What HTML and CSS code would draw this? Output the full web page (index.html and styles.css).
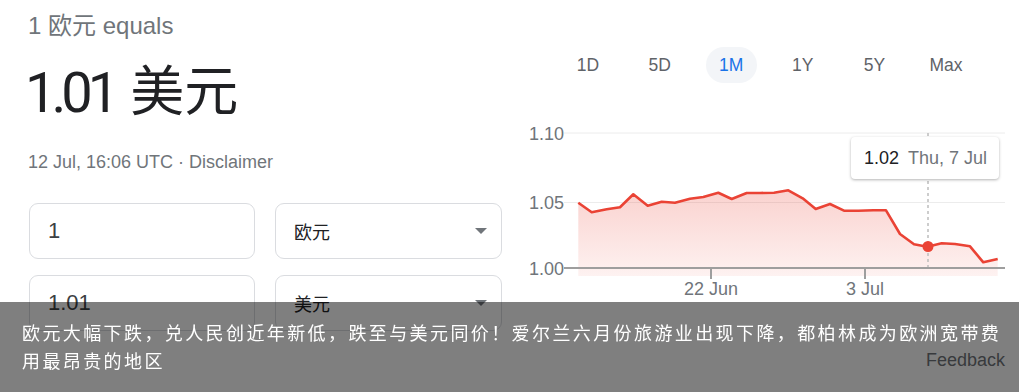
FILE: index.html
```html
<!DOCTYPE html>
<html lang="en">
<head>
    <meta charset="UTF-8">
    <meta name="viewport" content="width=device-width, initial-scale=1.0">
    <title>Currency converter</title>
    <link rel="stylesheet" href="styles.css">
</head>
<body>
    <div class="page">
        <div class="main">
            <div class="left">
                <div class="equals">1 欧元 equals</div>
                <div class="result"><span class="result-num">1.01</span><span class="result-unit">美元</span></div>
                <div class="updated">12 Jul, 16:06 UTC · Disclaimer</div>
                <div class="converter">
                    <div class="field amount">1</div>
                    <div class="field select">欧元<span class="arrow"></span></div>
                    <div class="field amount">1.01</div>
                    <div class="field select">美元<span class="arrow"></span></div>
                </div>
            </div>
            <div class="right">
                <div class="tabs">
                    <span class="tab">1D</span>
                    <span class="tab">5D</span>
                    <span class="tab active">1M</span>
                    <span class="tab">1Y</span>
                    <span class="tab">5Y</span>
                    <span class="tab">Max</span>
                </div>
                <div class="chart">
                    <svg width="499" height="190" viewBox="520 115 499 190">
                        <defs>
                            <linearGradient id="fillGrad" x1="0" y1="0" x2="0" y2="1">
                                <stop offset="0" stop-color="#ea4335" stop-opacity="0.24"/>
                                <stop offset="1" stop-color="#ea4335" stop-opacity="0.07"/>
                            </linearGradient>
                        </defs>
                        <line x1="564" y1="133" x2="1005" y2="133" stroke="#ececec" stroke-width="1"/>
                        <line x1="564" y1="202.5" x2="1005" y2="202.5" stroke="#ececec" stroke-width="1"/>
                        <polygon fill="url(#fillGrad)" points="578.3,202.7 591.7,212.3 606.7,209.3 620,207.3 633.3,194.3 647.7,205.7 661.7,201.7 675,202.7 690,198.7 703.3,197 718.3,192.7 731.7,199 746.7,193 760,193 774,192.7 788.3,190.3 802.7,198.3 815.7,209 830,204 844,210.7 858.3,210.7 873.3,210.3 886,210.3 900,234 914,244.3 927.3,246.7 941.7,243.3 955,244 970,246.3 983.3,262.3 997.7,259 997.7,276 578.3,276"/>
                        <line x1="928" y1="133" x2="928" y2="268" stroke="#bdbdbd" stroke-width="1.5" stroke-dasharray="3 3"/>
                        <line x1="564" y1="268" x2="1005" y2="268" stroke="#9e9e9e" stroke-width="2"/>
                        <line x1="711" y1="268" x2="711" y2="279" stroke="#9e9e9e" stroke-width="2"/>
                        <line x1="865" y1="268" x2="865" y2="279" stroke="#9e9e9e" stroke-width="2"/>
                        <polyline fill="none" stroke="#ea4335" stroke-width="2.6" stroke-linejoin="round" points="578.3,202.7 591.7,212.3 606.7,209.3 620,207.3 633.3,194.3 647.7,205.7 661.7,201.7 675,202.7 690,198.7 703.3,197 718.3,192.7 731.7,199 746.7,193 760,193 774,192.7 788.3,190.3 802.7,198.3 815.7,209 830,204 844,210.7 858.3,210.7 873.3,210.3 886,210.3 900,234 914,244.3 927.3,246.7 941.7,243.3 955,244 970,246.3 983.3,262.3 997.7,259"/>
                        <circle cx="928" cy="246.5" r="5.5" fill="#ea4335"/>
                        <text class="ylabel" x="564" y="140" text-anchor="end">1.10</text>
                        <text class="ylabel" x="564" y="208.5" text-anchor="end">1.05</text>
                        <text class="ylabel" x="564" y="275" text-anchor="end">1.00</text>
                        <text class="xlabel" x="711" y="295" text-anchor="middle">22 Jun</text>
                        <text class="xlabel" x="865" y="295" text-anchor="middle">3 Jul</text>
                    </svg>
                    <div class="tooltip"><span class="tip-value">1.02</span><span class="tip-date">Thu, 7 Jul</span></div>
                </div>
            </div>
        </div>
        <div class="feedback">Feedback</div>
    </div>
    <div class="caption">欧元大幅下跌，兑人民创近年新低，跌至与美元同价！爱尔兰六月份旅游业出现下降，都柏林成为欧洲宽带费用最昂贵的地区</div>
</body>
</html>
```

FILE: styles.css
```css
body {
    margin: 0;
    background-color: white;
    font-family: Arial, "Liberation Sans", "Noto Sans CJK SC", sans-serif;
    color: #202124;
}
.main {
    display: flex;
    gap: 18px;
    padding-left: 28px;
}
.left {
    width: 474px;
}
.equals {
    padding-top: 12px;
    font-size: 24px;
    line-height: 28px;
    color: #70757a;
}
.result {
    margin-top: 21px;
    font-family: Roboto, "Noto Sans CJK SC", sans-serif;
    font-size: 56px;
    line-height: 64px;
    color: #202124;
    display: flex;
}
.result-num {
    letter-spacing: -5px;
    margin-left: -3px;
}
.result-unit {
    margin-left: 16px;
    font-size: 54px;
}
.updated {
    margin-top: 25px;
    font-size: 18px;
    line-height: 24px;
    color: #70757a;
}
.converter {
    margin-top: 29px;
    display: grid;
    grid-template-columns: 226px 227px;
    grid-auto-rows: 56px;
    column-gap: 20px;
    row-gap: 16px;
    padding-left: 1px;
}
.field {
    border: 1px solid #dadce0;
    border-radius: 9px;
    display: flex;
    align-items: center;
    padding-left: 18px;
}
.amount {
    font-size: 22px;
    color: #3c4043;
}
.select {
    font-size: 18px;
    color: #202124;
    justify-content: space-between;
    padding-right: 14px;
}
.arrow {
    width: 0;
    height: 0;
    border-left: 6px solid transparent;
    border-right: 6px solid transparent;
    border-top: 6px solid #70757a;
}
.right {
    width: 499px;
}
.tabs {
    display: flex;
    gap: 20.6px;
    padding-top: 47px;
    padding-left: 42.5px;
}
.tab {
    width: 51px;
    height: 36px;
    line-height: 36px;
    border-radius: 18px;
    text-align: center;
    font-size: 17.5px;
    color: #5f6368;
}
.tab.active {
    background-color: #f3f5f8;
    color: #1a73e8;
}
.chart {
    position: relative;
    margin-top: 32px;
    height: 190px;
}
.chart svg {
    display: block;
}
.ylabel,
.xlabel {
    font-family: Arial, "Liberation Sans", sans-serif;
    font-size: 18px;
    fill: #70757a;
}
.tooltip {
    position: absolute;
    left: 331px;
    top: 22px;
    width: 148px;
    height: 42px;
    box-sizing: border-box;
    padding-left: 13px;
    background-color: white;
    border-radius: 4px;
    box-shadow: 0 1px 3px rgba(0, 0, 0, 0.3);
    display: flex;
    align-items: center;
    font-size: 18px;
}
.tip-value {
    color: #202124;
    margin-right: 9px;
}
.tip-date {
    color: #70757a;
}
.feedback {
    margin-top: 17px;
    padding-right: 14px;
    text-align: right;
    font-size: 18px;
    line-height: 24px;
    color: #70757a;
}
.caption {
    position: fixed;
    left: 0;
    right: 0;
    top: 302px;
    bottom: 0;
    padding: 16px 10px 0 22px;
    background-color: rgba(0, 0, 0, 0.5);
    color: white;
    font-family: "Noto Sans CJK SC", sans-serif;
    font-size: 18px;
    line-height: 28px;
    letter-spacing: 2.4px;
}
```
